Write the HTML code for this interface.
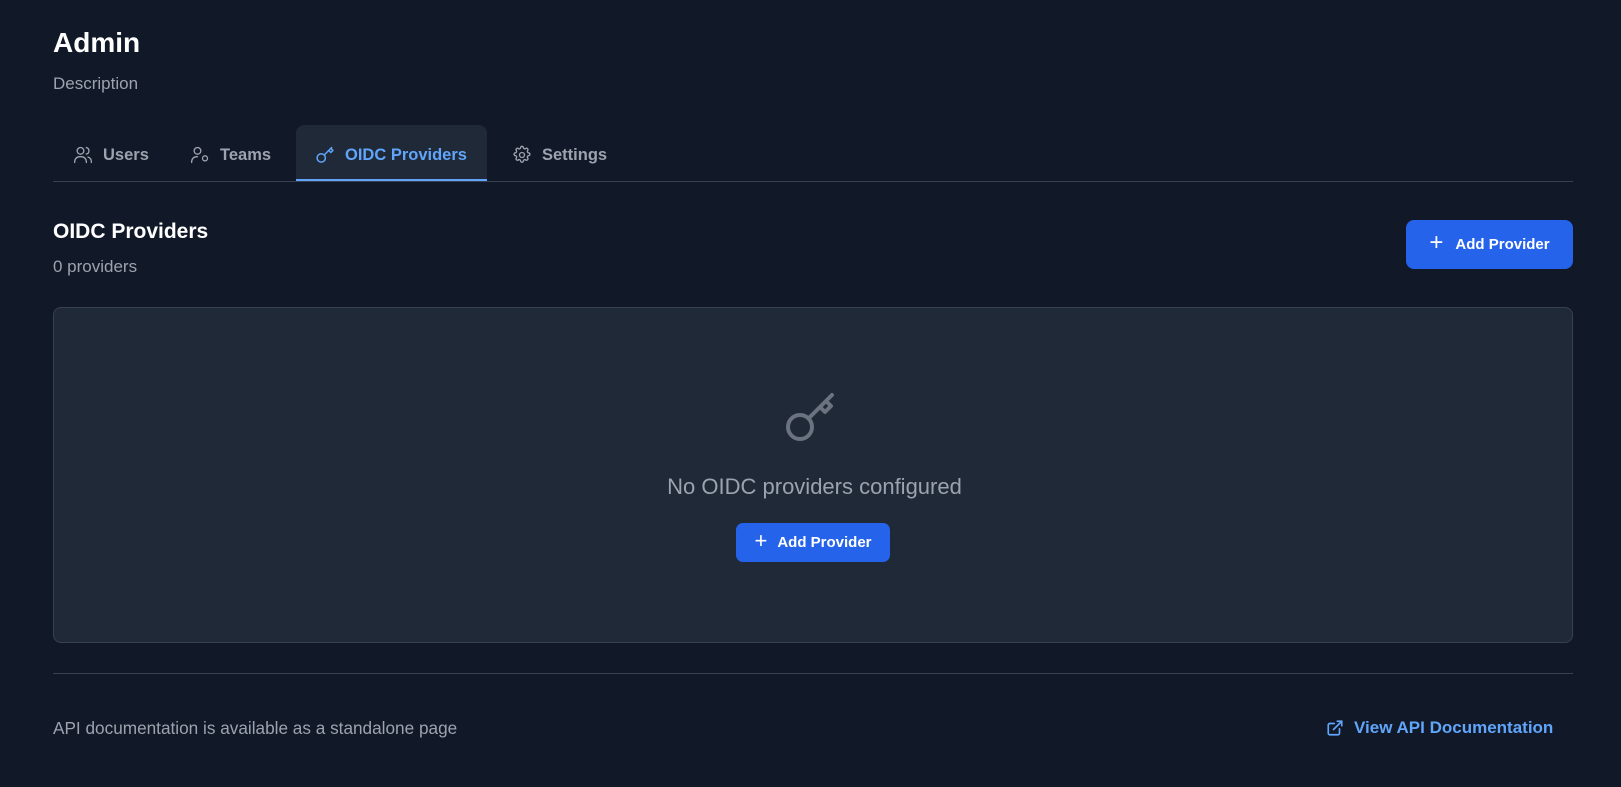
<!DOCTYPE html>
<html><head><meta charset="utf-8"><style>
*{box-sizing:border-box;margin:0;padding:0}
body{width:1621px;height:787px;background:#111827;font-family:"Liberation Sans",sans-serif;color:#fff;position:relative;overflow:hidden}
.a{position:absolute}
svg{display:block}
.tab{position:absolute;top:127px;height:56px;display:flex;align-items:center;gap:10px;font-size:16.5px;font-weight:bold;color:#9ca3af}
.btn{position:absolute;background:#2563eb;color:#fff;font-weight:bold;font-size:15px;display:flex;align-items:center;justify-content:center;gap:12px}
</style></head><body>
<div class="a" style="left:53px;top:27px;font-size:28px;font-weight:bold">Admin</div>
<div class="a" style="left:53px;top:74px;font-size:17px;color:#9ca3af">Description</div>

<div class="a" style="left:296px;top:125px;width:191px;height:56px;background:#1f2937;border-radius:8px 8px 0 0"></div>
<div class="a" style="left:53px;top:181px;width:1520px;height:1px;background:#374151"></div>
<div class="a" style="left:296px;top:179px;width:191px;height:2px;background:#60a5fa"></div>

<div class="tab" style="left:73px"><svg width="20" height="20" viewBox="0 0 24 24" fill="none" stroke="#9ca3af" stroke-width="1.6" stroke-linecap="round"><circle cx="9" cy="7" r="4"/><path d="M2 21v-1a6 6 0 0 1 6-6h2a6 6 0 0 1 6 6v1M16 3.1a4 4 0 0 1 0 7.8M22 21v-1a6 6 0 0 0-4-5.6"/></svg>Users</div>
<div class="tab" style="left:190px"><svg width="20" height="20" viewBox="0 0 24 24" fill="none" stroke="#9ca3af" stroke-width="1.6" stroke-linecap="round"><circle cx="9" cy="7" r="4"/><path d="M2 21v-1a6 6 0 0 1 6-6h1"/><circle cx="18" cy="16" r="3"/></svg>Teams</div>
<div class="tab" style="left:315px;color:#60a5fa"><svg width="20" height="20" viewBox="0 0 24 24" fill="none" stroke="#60a5fa" stroke-width="1.8" stroke-linecap="round" stroke-linejoin="round"><circle cx="7.5" cy="15.5" r="5"/><path d="M11 12l9-9M16.5 6.5l2.5 2.5 2.5-2.5-2.5-2.5"/></svg>OIDC Providers</div>
<div class="tab" style="left:512px"><svg width="20" height="20" viewBox="0 0 24 24" fill="none" stroke="#9ca3af" stroke-width="1.6"><circle cx="12" cy="12" r="3"/><path d="M10.3 3.3a1.7 1.7 0 0 1 3.4 0 1.7 1.7 0 0 0 2.6 1.1 1.7 1.7 0 0 1 2.4 2.4 1.7 1.7 0 0 0 1.1 2.6 1.7 1.7 0 0 1 0 3.4 1.7 1.7 0 0 0-1.1 2.6 1.7 1.7 0 0 1-2.4 2.4 1.7 1.7 0 0 0-2.6 1.1 1.7 1.7 0 0 1-3.4 0 1.7 1.7 0 0 0-2.6-1.1 1.7 1.7 0 0 1-2.4-2.4 1.7 1.7 0 0 0-1.1-2.6 1.7 1.7 0 0 1 0-3.4 1.7 1.7 0 0 0 1.1-2.6 1.7 1.7 0 0 1 2.4-2.4 1.7 1.7 0 0 0 2.6-1.1z"/></svg>Settings</div>

<div class="a" style="left:53px;top:220px;font-size:21px;font-weight:bold">OIDC Providers</div>
<div class="a" style="left:53px;top:257px;font-size:17px;color:#9ca3af">0 providers</div>
<div class="btn" style="left:1406px;top:220px;width:167px;height:49px;border-radius:8px"><span style="font-size:24px;font-weight:normal;margin-top:-3px">+</span>Add Provider</div>

<div class="a" style="left:53px;top:307px;width:1520px;height:336px;background:#1f2937;border:1px solid #374151;border-radius:8px"></div>
<svg class="a" style="left:780px;top:385px" width="60" height="60" viewBox="0 0 60 60" fill="none" stroke="#6b7280" stroke-width="4" stroke-linecap="round" stroke-linejoin="round"><circle cx="20" cy="42" r="12"/><path d="M29 33l23-23M40 22l5 5 6-6-5-5"/></svg>
<div class="a" style="left:0;width:1621px;top:474px;text-align:center;font-size:22px;color:#9ca3af;padding-left:8px">No OIDC providers configured</div>
<div class="btn" style="left:736px;top:523px;width:154px;height:39px;border-radius:7px;gap:10px"><span style="font-size:22px;font-weight:normal;margin-top:-3px">+</span>Add Provider</div>

<div class="a" style="left:53px;top:673px;width:1520px;height:1px;background:#374151"></div>
<div class="a" style="left:53px;top:718px;font-size:17.2px;color:#9ca3af">API documentation is available as a standalone page</div>
<div class="a" style="left:1326px;top:718px;display:flex;align-items:center;gap:10px;font-size:17px;font-weight:bold;color:#60a5fa"><svg width="18" height="18" viewBox="0 0 24 24" fill="none" stroke="#60a5fa" stroke-width="2.2" stroke-linecap="round"><path d="M18 13v6a2 2 0 0 1-2 2H5a2 2 0 0 1-2-2V8a2 2 0 0 1 2-2h6M15 3h6v6M10 14L21 3"/></svg>View API Documentation</div>
</body></html>
